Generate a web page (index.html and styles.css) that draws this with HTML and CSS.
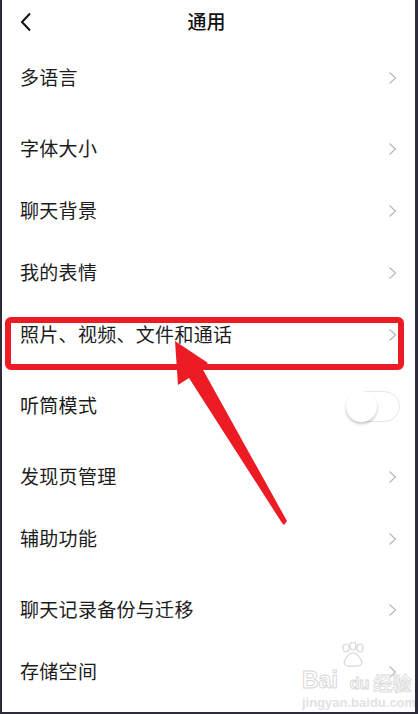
FILE: index.html
```html
<!DOCTYPE html>
<html lang="zh">
<head>
<meta charset="utf-8">
<title>通用</title>
<link rel="stylesheet" href="styles.css">
</head>
<body>
<div class="screen">
  <header class="topbar">
    <svg class="back" width="14" height="20" viewBox="0 0 14 20"><polyline points="11,1.5 3,10 11,18.5" fill="none" stroke="#111" stroke-width="2"/></svg>
    <div class="title">通用</div>
  </header>

  <section class="group">
    <div class="row"><span class="label">多语言</span><svg class="chev" width="9" height="14" viewBox="0 0 9 14"><polyline points="1.5,1.5 7.5,7 1.5,12.5" fill="none" stroke="#b8b8b8" stroke-width="1.2"/></svg></div>
  </section>
  <section class="group">
    <div class="row"><span class="label">字体大小</span><svg class="chev" width="9" height="14" viewBox="0 0 9 14"><polyline points="1.5,1.5 7.5,7 1.5,12.5" fill="none" stroke="#b8b8b8" stroke-width="1.2"/></svg></div>
    <div class="row"><span class="label">聊天背景</span><svg class="chev" width="9" height="14" viewBox="0 0 9 14"><polyline points="1.5,1.5 7.5,7 1.5,12.5" fill="none" stroke="#b8b8b8" stroke-width="1.2"/></svg></div>
    <div class="row"><span class="label">我的表情</span><svg class="chev" width="9" height="14" viewBox="0 0 9 14"><polyline points="1.5,1.5 7.5,7 1.5,12.5" fill="none" stroke="#b8b8b8" stroke-width="1.2"/></svg></div>
    <div class="row"><span class="label">照片、视频、文件和通话</span><svg class="chev" width="9" height="14" viewBox="0 0 9 14"><polyline points="1.5,1.5 7.5,7 1.5,12.5" fill="none" stroke="#b8b8b8" stroke-width="1.2"/></svg></div>
  </section>
  <section class="group">
    <div class="row"><span class="label">听筒模式</span><span class="toggle"><span class="knob"></span></span></div>
  </section>
  <section class="group">
    <div class="row"><span class="label">发现页管理</span><svg class="chev" width="9" height="14" viewBox="0 0 9 14"><polyline points="1.5,1.5 7.5,7 1.5,12.5" fill="none" stroke="#b8b8b8" stroke-width="1.2"/></svg></div>
    <div class="row"><span class="label">辅助功能</span><svg class="chev" width="9" height="14" viewBox="0 0 9 14"><polyline points="1.5,1.5 7.5,7 1.5,12.5" fill="none" stroke="#b8b8b8" stroke-width="1.2"/></svg></div>
  </section>
  <section class="group">
    <div class="row"><span class="label">聊天记录备份与迁移</span><svg class="chev" width="9" height="14" viewBox="0 0 9 14"><polyline points="1.5,1.5 7.5,7 1.5,12.5" fill="none" stroke="#b8b8b8" stroke-width="1.2"/></svg></div>
    <div class="row"><span class="label">存储空间</span><svg class="chev" width="9" height="14" viewBox="0 0 9 14"><polyline points="1.5,1.5 7.5,7 1.5,12.5" fill="none" stroke="#b8b8b8" stroke-width="1.2"/></svg></div>
  </section>

  <div class="watermark">
    <div class="wm-top"><span class="wm-bai">Bai</span><svg class="paw" width="30" height="26" viewBox="0 0 30 26"><g fill="none" stroke="#d6d6d6" stroke-width="1.2"><ellipse cx="8" cy="6" rx="3" ry="4"/><ellipse cx="15" cy="4" rx="3" ry="4"/><ellipse cx="22" cy="6" rx="3" ry="4"/><path d="M6 20 Q10 11 15 11 Q20 11 24 20 Q24 25 15 24 Q6 25 6 20 Z"/></g></svg><span class="wm-du">du</span><span class="wm-cn">经验</span></div>
    <div class="wm-url">jingyan.baidu.com</div>
  </div>

  <svg class="annot" width="418" height="714" viewBox="0 0 418 714">
    <rect x="8" y="320" width="393" height="47" rx="3" fill="none" stroke="#ed1c24" stroke-width="6"/>
    <polygon points="175,341 208,363 202,368 287,521 284,525 282,523 189,378 178,385" fill="#ed1c24"/>
  </svg>
</div>
</body>
</html>
```
FILE: styles.css
```css
* { box-sizing: border-box; }
html, body { margin: 0; padding: 0; background: #fff; }
body { font-family: "Noto Sans CJK SC", "Noto Sans", sans-serif; color: #1a1a1a; }

.screen {
  position: relative;
  width: 418px;
  height: 714px;
  overflow: hidden;
  background: #fff;
  border-left: 2px solid #2c2c3c;
  border-right: 3px solid #2c2c3c;
  border-bottom: 2px solid #2c2c3c;
}

.topbar {
  height: 47px;
  display: flex;
  align-items: center;
  justify-content: center;
  position: relative;
}
.back { position: absolute; left: 17px; top: 12px; }
.title { font-size: 19px; font-weight: 500; color: #111; margin-left: -4px; margin-top: -7px; }

.group { display: flex; flex-direction: column; }
.group + .group { margin-top: 9px; }

.row {
  height: 62px;
  display: flex;
  align-items: center;
  justify-content: space-between;
  padding: 0 18px 0 18px;
}
.label { font-size: 19px; line-height: 1; color: #1c1c1c; letter-spacing: 0.3px; margin-top: -4px; }
.chev { flex: none; }

.toggle {
  width: 54px;
  height: 31px;
  border-radius: 16px;
  border: 1px solid #e6e6e6;
  background: #fff;
  position: relative;
  margin-right: -3px;
}
.knob {
  position: absolute;
  left: -1px;
  top: -1px;
  width: 31px;
  height: 31px;
  border-radius: 50%;
  background: #fff;
  box-shadow: 0 2px 3px rgba(0,0,0,0.22);
}

.watermark {
  position: absolute;
  left: 300px;
  top: 662px;
  color: #dcdcdc;
  font-family: "Liberation Sans", sans-serif;
}
.wm-top { display: flex; align-items: flex-end; height: 30px; position: relative; }
.wm-bai { font-size: 23px; font-weight: 700; color: transparent; -webkit-text-stroke: 1px #d8d8d8; line-height: 1; }
.paw { position: absolute; left: 36px; top: -20px; }
.wm-du { font-size: 16px; font-weight: 700; color: transparent; -webkit-text-stroke: 1px #d8d8d8; margin-left: 12px; line-height: 1; }
.wm-cn { font-family: "Noto Sans CJK SC", sans-serif; font-size: 19px; font-weight: 700; color: transparent; -webkit-text-stroke: 0.8px #d8d8d8; margin-left: 4px; line-height: 1; }
.wm-url { font-size: 13px; color: #e2e2e2; font-weight: 700; margin-top: 3px; }

.annot { position: absolute; left: -2px; top: 0; pointer-events: none; }
```
